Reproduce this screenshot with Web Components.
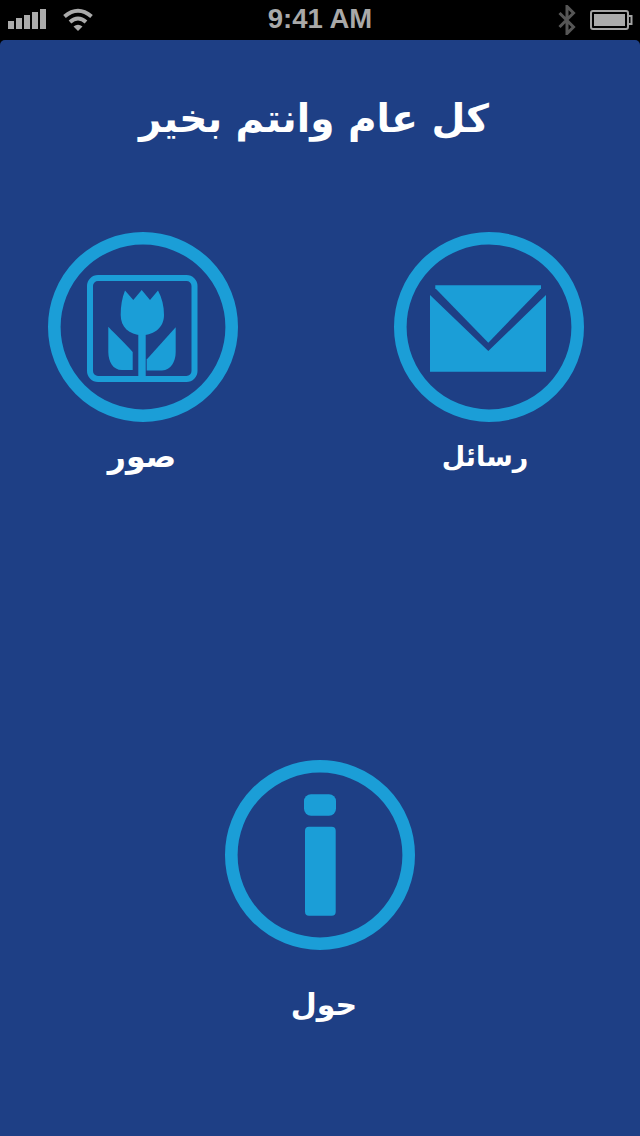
<!DOCTYPE html>
<html lang="ar">
<head>
<meta charset="utf-8">
<title>كل عام وانتم بخير</title>
<style>
  html, body { margin: 0; padding: 0; background: #000; }
  body { width: 640px; height: 1136px; overflow: hidden; }
</style>
</head>
<body>
<app-screen>
  <status-bar slot="status"></status-bar>
  <greeting-title slot="title">كل عام وانتم بخير</greeting-title>
  <menu-tile slot="photos" icon="photos" style="--label-gap: 16px; --label-shift: -1px; --label-size: 31.5px">صور</menu-tile>
  <menu-tile slot="messages" icon="messages" style="--label-gap: 17px; --label-shift: -4px; --label-size: 27px">رسائل</menu-tile>
  <menu-tile slot="about" icon="about" style="--label-gap: 37px; --label-shift: 4px; --label-size: 30px">حول</menu-tile>
</app-screen>

<script>
class AppScreen extends HTMLElement {
  constructor() {
    super();
    this.attachShadow({ mode: "open" });
    this.shadowRoot.innerHTML = `
      <style>
        :host {
          display: flex;
          flex-direction: column;
          width: 640px;
          height: 1136px;
          background: #000;
        }
        main {
          flex: 1;
          background: #1e3f85;
          border-radius: 5px 5px 0 0;
          padding-top: 55px;
          display: flex;
          flex-direction: column;
        }
        .top {
          display: grid;
          grid-template-columns: 190px 190px;
          justify-content: space-between;
          padding: 89px 56px 0 48px;
        }
        .bottom {
          display: flex;
          justify-content: center;
          padding-top: 285px;
        }
      </style>
      <slot name="status"></slot>
      <main>
        <slot name="title"></slot>
        <div class="top">
          <slot name="photos"></slot>
          <slot name="messages"></slot>
        </div>
        <div class="bottom">
          <slot name="about"></slot>
        </div>
      </main>
    `;
  }
}

class StatusBar extends HTMLElement {
  constructor() {
    super();
    this.attachShadow({ mode: "open" });
    this.shadowRoot.innerHTML = `
      <style>
        :host {
          display: grid;
          grid-template-columns: 1fr auto 1fr;
          align-items: center;
          height: 40px;
          background: #000;
          color: #a9a9a9;
          font: bold 27.5px "Liberation Sans", Arial, sans-serif;
        }
        .left, .right { display: flex; align-items: center; }
        .left { padding-left: 8px; gap: 17px; }
        .right { justify-content: flex-end; padding-right: 7px; gap: 14px; }
        svg { display: block; }
        .time { line-height: 40px; position: relative; top: -1px; }
      </style>
      <div class="left">
        <svg width="38" height="22" viewBox="0 0 38 22" fill="#ababab">
          <rect x="0" y="12" width="6" height="8"/>
          <rect x="8" y="9" width="6" height="11"/>
          <rect x="16" y="6" width="6" height="14"/>
          <rect x="24" y="3" width="6" height="17"/>
          <rect x="32" y="0" width="6" height="20"/>
        </svg>
        <svg width="30" height="24" viewBox="0 0 30 24" fill="none" stroke="#ababab">
          <path d="M1.5 8.5 Q15 -3 28.5 8.5" stroke-width="4"/>
          <path d="M7 14 Q15 7 23 14" stroke-width="4"/>
          <path d="M10.5 18.5 Q15 15 19.5 18.5 L15 23 Z" fill="#ababab" stroke="none"/>
        </svg>
      </div>
      <div class="time">9:41 AM</div>
      <div class="right">
        <svg width="18" height="30" viewBox="0 0 18 30" fill="none" stroke="#565656" stroke-width="3">
          <path d="M1.5 8 L15.5 22 L9 28.5 V1.5 L15.5 8 L1.5 22"/>
        </svg>
        <svg width="43" height="20" viewBox="0 0 43 20">
          <rect x="1" y="1" width="37" height="18" rx="2" fill="none" stroke="#a3a3a3" stroke-width="2"/>
          <rect x="4" y="4" width="31" height="12" fill="#ababab"/>
          <path d="M38 6 H41.5 V14 H38" fill="none" stroke="#a3a3a3" stroke-width="2"/>
        </svg>
      </div>
    `;
  }
}

class GreetingTitle extends HTMLElement {
  constructor() {
    super();
    this.attachShadow({ mode: "open" });
    this.shadowRoot.innerHTML = `
      <style>
        :host {
          display: block;
          direction: rtl;
          text-align: center;
          padding-right: 12px;
          color: #fff;
          font: bold 39px/48px "DejaVu Sans", sans-serif;
        }
      </style>
      <slot></slot>
    `;
  }
}

const ICONS = {
  photos: `
    <rect x="42" y="46" width="104.5" height="101" rx="8" fill="none" stroke="currentColor" stroke-width="6"/>
    <path d="M77 58.5 L85.3 68 L93.7 58 L102 68 L110 58.5 C114 66 116 74 116 83 C116 95 107 103 94 103 C81 103 72.7 95 72.7 83 C72.7 74 74 66 77 58.5 Z"/>
    <rect x="90.3" y="102" width="7.4" height="44"/>
    <path d="M60.3 94.7 C68 103 78 112 84.7 120 V138 H74 C65 138 60.5 130 60.3 120 Z"/>
    <path d="M127.7 95.3 V120 C127.5 130 123 138 114 138.5 H98.7 V127.5 Z"/>
  `,
  messages: `
    <path d="M41.3 53.3 H147 V56.3 L94.3 110.7 L41.3 56.3 Z"/>
    <path d="M36 63 L94.3 119 L152 63 V139.7 H36 Z"/>
  `,
  about: `
    <rect x="79" y="34.3" width="32" height="21.4" rx="7"/>
    <rect x="80" y="66.7" width="30.7" height="89" rx="4"/>
  `,
};

class MenuTile extends HTMLElement {
  constructor() {
    super();
    this.attachShadow({ mode: "open" });
  }

  connectedCallback() {
    const icon = this.getAttribute("icon");
    this.shadowRoot.innerHTML = `
      <style>
        :host {
          display: flex;
          flex-direction: column;
          align-items: center;
          width: 190px;
          color: #fff;
          font: bold var(--label-size, 29px)/36px "DejaVu Sans", sans-serif;
        }
        svg { display: block; color: #1b9ed7; fill: currentColor; }
        .label {
          direction: rtl;
          margin-top: var(--label-gap, 17px);
          transform: translateX(var(--label-shift, 0));
        }
      </style>
      <svg width="190" height="190" viewBox="0 0 190 190">
        <circle cx="95" cy="95" r="88.7" fill="none" stroke="currentColor" stroke-width="12.6"/>
        ${ICONS[icon] || ""}
      </svg>
      <div class="label"><slot></slot></div>
    `;
  }
}

customElements.define("app-screen", AppScreen);
customElements.define("status-bar", StatusBar);
customElements.define("greeting-title", GreetingTitle);
customElements.define("menu-tile", MenuTile);
</script>
</body>
</html>
